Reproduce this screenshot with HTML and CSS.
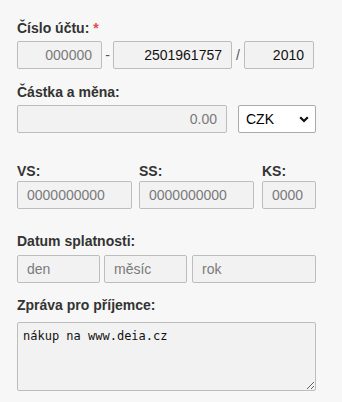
FILE: index.html
```html
<!DOCTYPE html>
<html>
<head>
    <title>Platba</title>
    <link rel="stylesheet" href="styles.css">
</head>
<body>
<div class="form">
    <div class="field field-account">
        <label class="label">Číslo účtu: <span class="req">*</span></label>
        <div class="row">
            <input class="input num prefix" type="text" placeholder="000000">
            <span class="sep sep-dash">-</span>
            <input class="input num number" type="text" value="2501961757">
            <span class="sep sep-slash">/</span>
            <input class="input num bank" type="text" value="2010">
        </div>
    </div>

    <div class="field field-amount">
        <label class="label">Částka a měna:</label>
        <div class="row">
            <input class="input num amount" type="text" placeholder="0.00">
            <div class="select">
                <span>CZK</span>
                <svg width="10" height="7" viewBox="0 0 10 7"><path d="M1.2 1.2 L5 5 L8.8 1.2" fill="none" stroke="#111" stroke-width="2.2"/></svg>
            </div>
        </div>
    </div>

    <div class="field field-symbols">
        <div class="row">
            <div class="col col-vs">
                <label class="label">VS:</label>
                <input class="input vs" type="text" placeholder="0000000000">
            </div>
            <div class="col col-ss">
                <label class="label">SS:</label>
                <input class="input ss" type="text" placeholder="0000000000">
            </div>
            <div class="col col-ks">
                <label class="label">KS:</label>
                <input class="input ks" type="text" placeholder="0000">
            </div>
        </div>
    </div>

    <div class="field field-date">
        <label class="label">Datum splatnosti:</label>
        <div class="row">
            <input class="input day" type="text" placeholder="den">
            <input class="input month" type="text" placeholder="měsíc">
            <input class="input year" type="text" placeholder="rok">
        </div>
    </div>

    <div class="field field-message">
        <label class="label">Zpráva pro příjemce:</label>
        <textarea class="message">nákup na www.deia.cz</textarea>
    </div>
</div>
</body>
</html>
```

FILE: styles.css
```css
body {
    margin: 0;
    background-color: #F7F7F7;
    font-family: "Liberation Sans", Arial, sans-serif;
    color: #333333;
}

.form {
    padding: 20px 0 0 17px;
    width: 299px;
}

.field {
    margin-bottom: 15px;
}

.label {
    display: block;
    font-weight: bold;
    font-size: 14px;
    line-height: 16px;
    margin-bottom: 5px;
    color: #333333;
}
.req { color: #E8474B; }

.row {
    display: flex;
    align-items: center;
}

.input {
    box-sizing: border-box;
    height: 28px;
    border: 1px solid #BDBDBD;
    border-radius: 2px;
    background-color: #F2F2F2;
    font-family: "Liberation Sans", Arial, sans-serif;
    font-size: 14px;
    color: #111111;
    padding: 0 9px;
    margin: 0;
    outline: none;
}
.input::placeholder { color: #7A7A7A; }
.num { text-align: right; padding-right: 9px; }

.sep {
    font-size: 14px;
    color: #555555;
    text-align: center;
}
.sep-dash { width: 11px; }
.sep-slash { width: 12px; }

.prefix { width: 85px; }
.number { width: 119px; }
.bank { width: 70px; }

.amount { width: 210px; margin-right: 11px; }

.select {
    box-sizing: border-box;
    width: 78px;
    height: 28px;
    border: 1px solid #AAAAAA;
    border-radius: 2px;
    background-color: #FFFFFF;
    display: flex;
    align-items: center;
    justify-content: space-between;
    padding: 0 6px 0 7px;
    font-size: 14px;
    color: #000000;
}

.field-symbols { margin-top: 30px; margin-bottom: 24px; }
.field-symbols .label { margin-bottom: 2px; }
.col-vs { width: 115px; margin-right: 7px; }
.col-ss { width: 115px; margin-right: 8px; }
.col-ks { width: 54px; }
.vs, .ss, .ks { width: 100%; }

.field-date { margin-bottom: 14px; }
.field-date .label { margin-bottom: 6px; }
.day { width: 83px; margin-right: 4px; }
.month { width: 83px; margin-right: 5px; }
.year { width: 124px; }

.message {
    box-sizing: border-box;
    display: block;
    width: 299px;
    height: 69px;
    border: 1px solid #BDBDBD;
    border-radius: 2px;
    background-color: #F2F2F2;
    font-family: "DejaVu Sans Mono", monospace;
    font-size: 12px;
    color: #111111;
    padding: 6px 5px;
    margin: 0;
    resize: vertical;
}
.field-message .label { margin-bottom: 9px; }
```
